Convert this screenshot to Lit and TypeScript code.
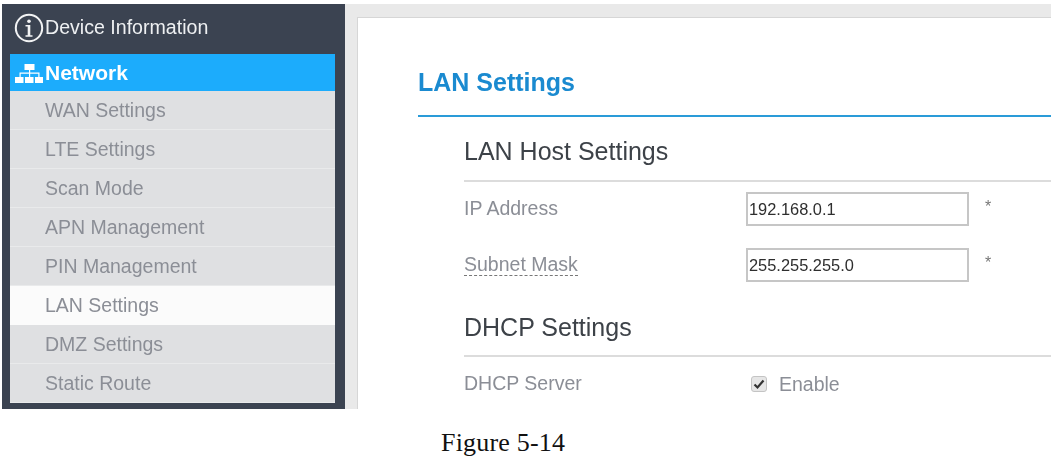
import { html, css, LitElement } from "lit";
import { customElement } from "lit/decorators.js";

const MENU = [
  "WAN Settings",
  "LTE Settings",
  "Scan Mode",
  "APN Management",
  "PIN Management",
  "LAN Settings",
  "DMZ Settings",
  "Static Route",
];

@customElement("app-root")
export class AppRoot extends LitElement {
  static styles = css`
    :host {
      display: block;
      width: 1051px;
      height: 463px;
      overflow: hidden;
      background: #fff;
      font-family: "Liberation Sans", Arial, sans-serif;
    }
    .shot {
      display: flex;
      height: 405px;
      margin: 4px 0 0 2px;
      filter: blur(0.4px);
    }
    .sidebar {
      flex: 0 0 343px;
      box-sizing: border-box;
      background: #3b4351;
      padding: 0 10px 6px 8px;
      display: flex;
      flex-direction: column;
    }
    .top-item {
      height: 50px;
      box-sizing: border-box;
      padding-bottom: 3px;
      display: flex;
      align-items: center;
      gap: 1px;
      margin-left: 4px;
      color: #eef0f2;
      font-size: 19.6px;
    }
    .network {
      height: 37px;
      box-sizing: border-box;
      padding: 1px 0 0 5px;
      display: flex;
      align-items: center;
      gap: 2px;
      background: #1cacfc;
      color: #fff;
      font-size: 21px;
      font-weight: bold;
    }
    .item {
      height: 39px;
      box-sizing: border-box;
      padding-left: 35px;
      display: flex;
      align-items: center;
      background: #dfe0e2;
      border-bottom: 1px solid #e9eaeb;
      color: #8b8e96;
      font-size: 19.5px;
    }
    .item.active {
      background: #fbfbfb;
      border-bottom-color: #fbfbfb;
    }
    .gutter {
      flex: 1;
      background: #e9e9e9;
      padding: 13px 0 0 12px;
      display: flex;
      min-width: 0;
    }
    .main {
      flex: 1;
      background: #fff;
      border-top: 1px solid #d6d6d6;
      border-left: 1px solid #d6d6d6;
      padding: 48px 0 0 60px;
      overflow: hidden;
    }
    h1 {
      margin: 0;
      height: 51px;
      box-sizing: border-box;
      border-bottom: 2px solid #2a9bd8;
      color: #1a8ad0;
      font-size: 25px;
      line-height: 32px;
      font-weight: bold;
    }
    .section {
      margin-left: 46px;
    }
    h2 {
      margin: 0;
      box-sizing: border-box;
      border-bottom: 2px solid #dcdcdc;
      color: #3d4248;
      font-size: 25px;
      font-weight: normal;
      line-height: 32px;
      padding-top: 18px;
      height: 65px;
    }
    h2.dhcp {
      padding-top: 29px;
      height: 75px;
    }
    .row {
      display: flex;
      align-items: center;
      height: 34px;
      margin-top: 22px;
      color: #8b8e96;
      font-size: 19.5px;
    }
    h2 + .row {
      margin-top: 10px;
    }
    .label {
      flex: 0 0 282px;
      margin-top: -1px;
    }
    .help {
      border-bottom: 1px dashed #777;
    }
    .field {
      box-sizing: border-box;
      width: 223px;
      height: 34px;
      border: 2px solid #c6c6c6;
      padding: 0 1px;
      display: flex;
      align-items: center;
      color: #2e2e2e;
      font-size: 16.4px;
    }
    .star {
      margin: -5px 0 0 16px;
      color: #777;
      font-size: 16px;
    }
    .box {
      width: 16px;
      height: 16px;
      margin: 0 12px 0 5px;
    }
    .caption {
      margin: 19px 0 0 441px;
      font-family: "Liberation Serif", serif;
      font-size: 26px;
      letter-spacing: 0.2px;
      line-height: 30px;
      color: #111;
    }
  `;

  render() {
    return html`
      <div class="shot">
        <nav class="sidebar">
          <div class="top-item">
            <svg width="30" height="30" viewBox="0 0 30 30" fill="none">
              <circle cx="15" cy="15" r="13.200" stroke="#f2f3f4" stroke-width="2" />
              <circle cx="15" cy="8.200" r="1.800" fill="#f2f3f4" />
              <path d="M11.500 12h4.800v10.200h2.200v1.500h-7v-1.500h2.200v-8.700h-2.200z" fill="#f2f3f4" />
            </svg>
            Device Information
          </div>
          <div class="network">
            <svg width="28" height="19" viewBox="0 0 28 19" fill="#fff">
              <rect x="9.500" y="0" width="10" height="6" />
              <path d="M14 6h1.200v2.500H24.500V13h-1.200v-3.300h-8.100V13H14V9.700H5.700V13H4.500V8.500H14z" />
              <rect x="0" y="13" width="8.500" height="6" />
              <rect x="10" y="13" width="8.500" height="6" />
              <rect x="20" y="13" width="8" height="6" />
            </svg>
            Network
          </div>
          ${MENU.map(
            (m) =>
              html`<div class="item ${m === "LAN Settings" ? "active" : ""}">${m}</div>`
          )}
        </nav>
        <div class="gutter">
          <main class="main">
            <h1>LAN Settings</h1>
            <div class="section">
              <h2>LAN Host Settings</h2>
              <div class="row">
                <div class="label">IP Address</div>
                <div class="field">192.168.0.1</div>
                <span class="star">*</span>
              </div>
              <div class="row">
                <div class="label"><span class="help">Subnet Mask</span></div>
                <div class="field">255.255.255.0</div>
                <span class="star">*</span>
              </div>
              <h2 class="dhcp">DHCP Settings</h2>
              <div class="row">
                <div class="label">DHCP Server</div>
                <svg class="box" viewBox="0 0 16 16">
                  <rect x="0.500" y="0.500" width="15" height="15" rx="2.500" fill="#e6e6e6" stroke="#c4c4c4" />
                  <path d="M3.500 8.500l3 3 6-7" fill="none" stroke="#333" stroke-width="2.200" />
                </svg>
                Enable
              </div>
            </div>
          </main>
        </div>
      </div>
      <div class="caption">Figure 5-14</div>
    `;
  }
}
